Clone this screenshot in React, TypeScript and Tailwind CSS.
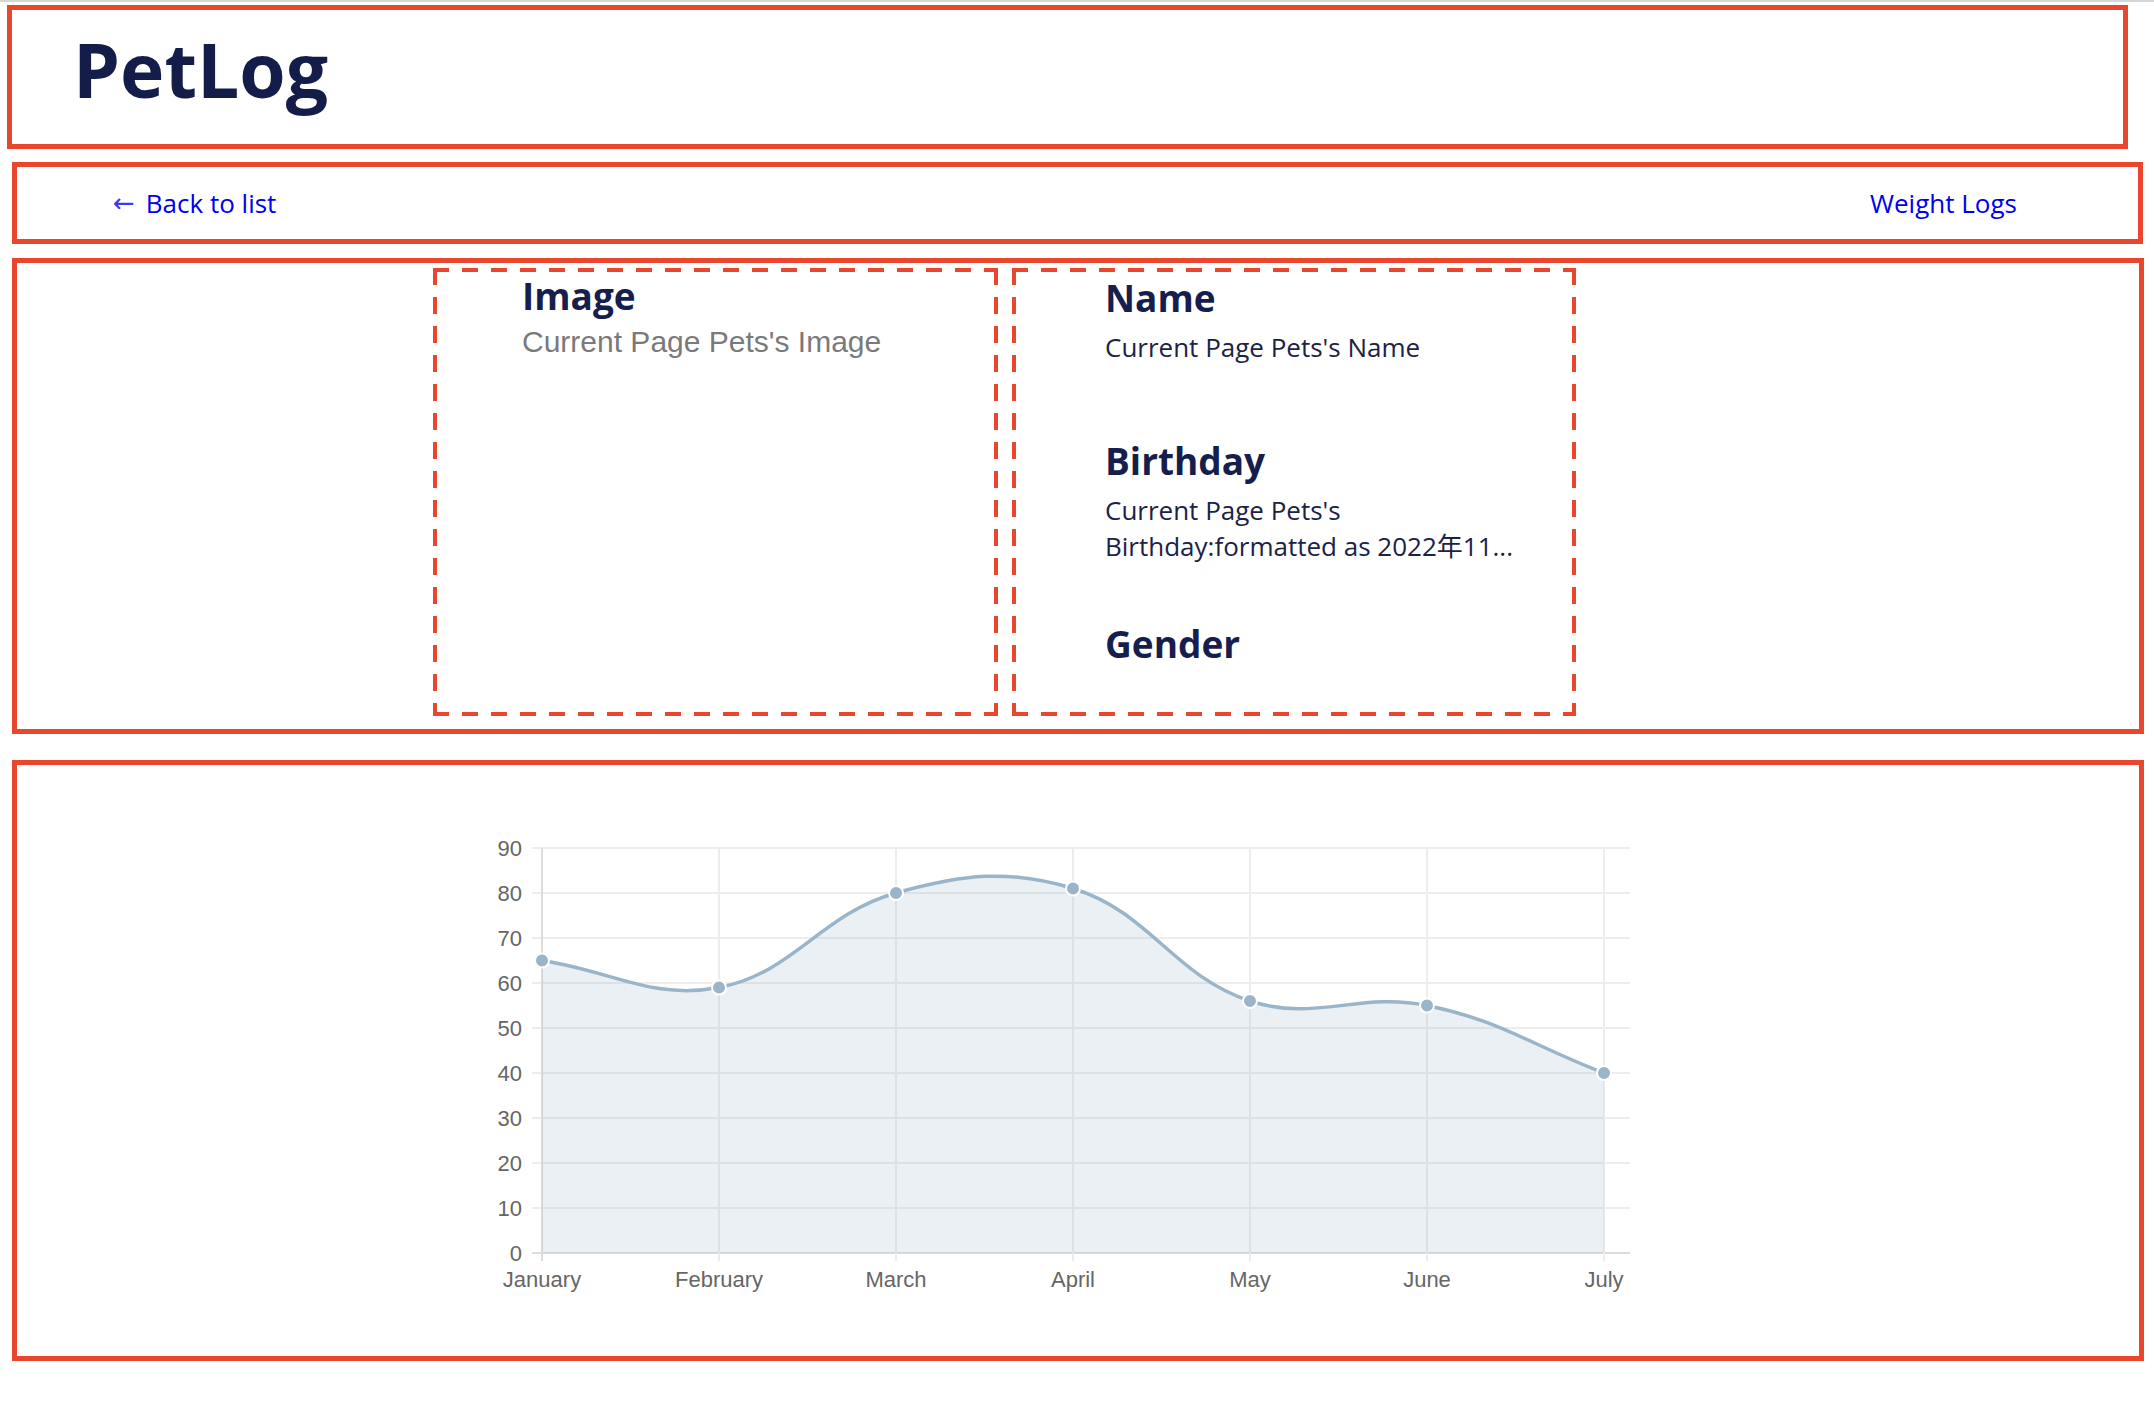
import React from "react";

const labels = ["January", "February", "March", "April", "May", "June", "July"];
const weights = [65, 59, 80, 81, 56, 55, 40];

const X0 = 542;
const STEP = 177;
const Y0 = 1253;
const PER = 4.5;

const px = (i: number) => X0 + i * STEP;
const py = (v: number) => Y0 - v * PER;

// same curve as chart.js (tension 0.4)
function splinePath(pts: { x: number; y: number }[], tension = 0.4) {
  const cps = pts.map((cur, i) => {
    const prev = pts[i - 1] ?? cur;
    const next = pts[i + 1] ?? cur;
    const d01 = Math.hypot(cur.x - prev.x, cur.y - prev.y);
    const d12 = Math.hypot(next.x - cur.x, next.y - cur.y);
    let s01 = d01 / (d01 + d12);
    let s12 = d12 / (d01 + d12);
    if (isNaN(s01)) s01 = 0;
    if (isNaN(s12)) s12 = 0;
    const fa = tension * s01;
    const fb = tension * s12;
    return {
      prev: { x: cur.x - fa * (next.x - prev.x), y: cur.y - fa * (next.y - prev.y) },
      next: { x: cur.x + fb * (next.x - prev.x), y: cur.y + fb * (next.y - prev.y) },
    };
  });
  let d = `M ${pts[0].x} ${pts[0].y}`;
  for (let i = 1; i < pts.length; i++) {
    const a = cps[i - 1].next;
    const b = cps[i].prev;
    d += ` C ${a.x} ${a.y} ${b.x} ${b.y} ${pts[i].x} ${pts[i].y}`;
  }
  return d;
}

function WeightChart() {
  const pts = weights.map((w, i) => ({ x: px(i), y: py(w) }));
  const line = splinePath(pts);
  const area = `${line} L ${px(6)} ${Y0} L ${px(0)} ${Y0} Z`;
  const ticks = [0, 10, 20, 30, 40, 50, 60, 70, 80, 90];

  return (
    <svg width="1180" height="480" viewBox="480 830 1180 480" className="block">
      {ticks.map((t) => (
        <g key={t}>
          <line x1={532} x2={1630} y1={py(t)} y2={py(t)} stroke={t === 0 ? "#dcdcdc" : "#ededed"} strokeWidth={2} />
          <text
            x={522}
            y={py(t) + 7.5}
            textAnchor="end"
            fontSize={22}
            fill="#666"
            fontFamily="'Liberation Sans', Arial, sans-serif"
          >
            {t}
          </text>
        </g>
      ))}
      {labels.map((l, i) => (
        <g key={l}>
          <line x1={px(i)} x2={px(i)} y1={848} y2={1261} stroke={i === 0 ? "#dcdcdc" : "#ededed"} strokeWidth={2} />
          <text
            x={px(i)}
            y={1287}
            textAnchor="middle"
            fontSize={22}
            fill="#666"
            fontFamily="'Liberation Sans', Arial, sans-serif"
          >
            {l}
          </text>
        </g>
      ))}
      <path d={area} fill="rgba(155,182,202,0.2)" />
      <path d={line} fill="none" stroke="#9ab5c9" strokeWidth={3.5} />
      {pts.map((p, i) => (
        <circle key={i} cx={p.x} cy={p.y} r={7} fill="#9ab5c9" stroke="#fff" strokeWidth={2} />
      ))}
    </svg>
  );
}

function Field({ title, children, className = "" }: { title: string; children?: React.ReactNode; className?: string }) {
  return (
    <div className={className}>
      <h2 className="text-[37px] leading-[44px] font-bold text-[#161e4d]">{title}</h2>
      {children && <p className="mt-[9px] max-w-[440px] text-[26px] leading-[36px] text-[#1b2246]">{children}</p>}
    </div>
  );
}

// long dashes like the wireframe (css dashed is too short)
const dashed =
  "[background:linear-gradient(90deg,#e8472e_16px,transparent_16px)_top_left/29px_4px_repeat-x,linear-gradient(90deg,#e8472e_16px,transparent_16px)_bottom_left/29px_4px_repeat-x,linear-gradient(#e8472e_17px,transparent_17px)_top_left/4px_29px_repeat-y,linear-gradient(#e8472e_17px,transparent_17px)_top_right/4px_29px_repeat-y]";

function App() {
  return (
    <div className="min-h-screen bg-white font-['Open_Sans','Noto_Sans_CJK_JP',sans-serif]">
      <div className="h-[2px] bg-[#d6d6d6]" />

      <header className="mt-[3px] ml-[7px] w-[2121px] h-[144px] border-[5px] border-[#e8472e] pl-[61px] pt-[22px]">
        <h1 className="text-[75px] leading-[75px] font-bold text-[#141c4a]">PetLog</h1>
      </header>

      <nav className="mt-[13px] ml-[12px] w-[2131px] h-[82px] border-[5px] border-[#e8472e] pl-[96px] pr-[121px] flex items-center justify-between text-[26px] text-[#0000ee]">
        <a href="#" className="flex items-center gap-[11px]">
          <span className="font-['DejaVu_Sans',sans-serif] text-[26px] leading-none text-[#3a3af0]">←</span>
          <span>Back to list</span>
        </a>
        <a href="#">Weight Logs</a>
      </nav>

      <section className="mt-[14px] ml-[12px] w-[2132px] h-[476px] border-[5px] border-[#e8472e] pt-[5px] pl-[416px] flex gap-[14px]">
        <div className={`w-[565px] h-[448px] p-[4px] ${dashed}`}>
          <div className="pl-[85px] pt-[2px]">
            <h2 className="text-[37px] leading-[44px] font-bold text-[#161e4d]">Image</h2>
            <p className="mt-[6px] font-['Liberation_Sans',Arial,sans-serif] text-[30px] leading-[36px] text-[#7a7a7a]">
              Current Page Pets's Image
            </p>
          </div>
        </div>
        <div className={`w-[564px] h-[448px] p-[4px] ${dashed}`}>
          <div className="pl-[89px] pt-[4px]">
            <Field title="Name">Current Page Pets's Name</Field>
            <Field title="Birthday" className="mt-[74px]">
              Current Page Pets's Birthday:formatted as 2022年11...
            </Field>
            <Field title="Gender" className="mt-[58px]" />
          </div>
        </div>
      </section>

      <section className="mt-[26px] ml-[12px] w-[2132px] h-[601px] border-[5px] border-[#e8472e] pt-[65px] pl-[463px]">
        <WeightChart />
      </section>
    </div>
  );
}

export default App;
